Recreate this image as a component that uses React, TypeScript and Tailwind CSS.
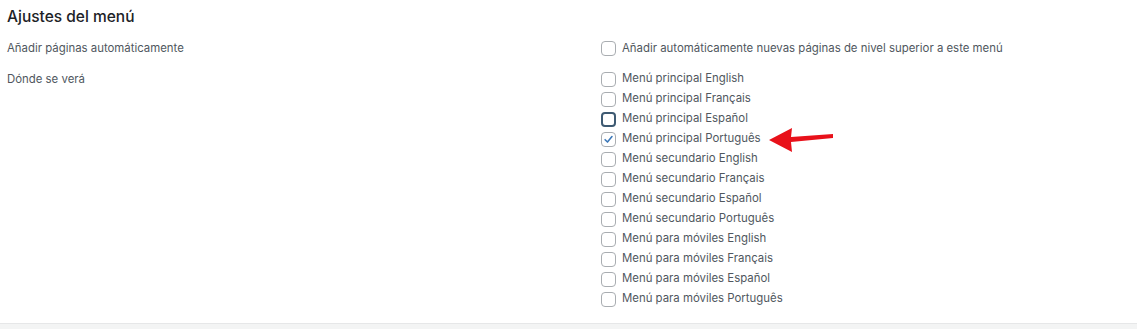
import React from "react";

const items = [
  "Menú principal English",
  "Menú principal Français",
  "Menú principal Español",
  "Menú principal Português",
  "Menú secundario English",
  "Menú secundario Français",
  "Menú secundario Español",
  "Menú secundario Português",
  "Menú para móviles English",
  "Menú para móviles Français",
  "Menú para móviles Español",
  "Menú para móviles Português",
];

function Box({ state }: { state?: "focus" | "checked" }) {
  if (state === "focus") {
    return (
      <span className="w-[15px] h-[15px] rounded-[4px] border-[2px] border-[#3e5a72] bg-white shrink-0" />
    );
  }
  return (
    <span className="w-[15px] h-[15px] rounded-[4px] border border-[#a9adb1] bg-white shrink-0 flex items-center justify-center">
      {state === "checked" && (
        <svg width="11" height="11" viewBox="0 0 12 12">
          <path d="M2.3 6.2 L4.9 8.8 L9.8 2.8" fill="none" stroke="#3a77b8" strokeWidth="1.7" strokeLinecap="round" strokeLinejoin="round" />
        </svg>
      )}
    </span>
  );
}

export default function App() {
  return (
    <div className="w-[1137px] h-[329px] bg-white flex flex-col text-[#50575e]" style={{ fontFamily: "Inter, 'Noto Sans', sans-serif" }}>
      <div className="flex-1 px-[7px] pt-[7px]">
        <h2 className="text-[15.5px] font-medium text-[#1d2327] leading-[20px]">Ajustes del menú</h2>
        <div className="flex mt-[12px] h-[20px] items-center text-[11.4px]">
          <div className="w-[594px]">Añadir páginas automáticamente</div>
          <label className="flex items-center gap-[6px]">
            <Box />
            <span>Añadir automáticamente nuevas páginas de nivel superior a este menú</span>
          </label>
        </div>
        <div className="flex mt-[10px] text-[11.4px]">
          <div className="w-[594px] leading-[20px]">Dónde se verá</div>
          <div className="flex flex-col">
            {items.map((t, i) => (
              <label key={t} className="flex items-center gap-[6px] h-[20px] relative">
                <Box state={i === 2 ? "focus" : i === 3 ? "checked" : undefined} />
                <span>{t}</span>
                {i === 3 && (
                  <svg className="absolute left-[168px] top-[-3px]" width="66" height="26" viewBox="0 0 66 26">
                    <path d="M0 14 L23 2 L22 11 L64 8 L64 12 L22 16 L23 26 Z" fill="#e8111a" />
                  </svg>
                )}
              </label>
            ))}
          </div>
        </div>
      </div>
      <div className="h-[6px] bg-[#f3f4f4] border-t border-[#e6e7e8]" />
    </div>
  );
}
